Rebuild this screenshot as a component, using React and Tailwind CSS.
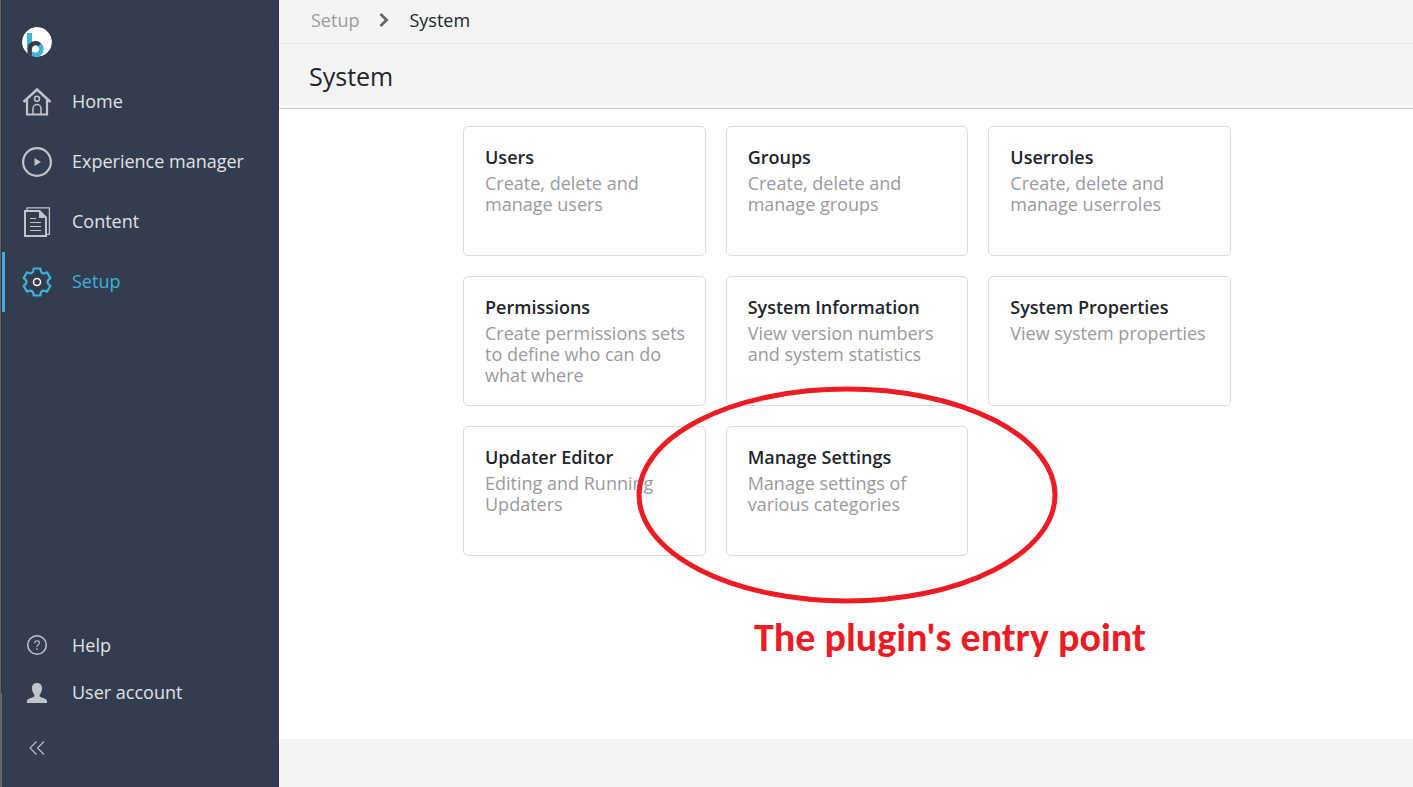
const HomeIcon = () => (
  <svg width="30" height="30" viewBox="0 0 30 30" fill="none" stroke="#c1c5cb" aria-hidden="true">
    <path d="M1.500 15 15 2.500 28.500 15" strokeWidth="2.400" />
    <path d="M5 13V27.500H25V13" strokeWidth="2.200" />
    <circle cx="15" cy="11.800" r="2.500" strokeWidth="1.500" />
    <path d="M11 27V21.500a4 4 0 0 1 8 0V27" strokeWidth="1.500" />
  </svg>
);

const PlayIcon = () => (
  <svg width="30" height="30" viewBox="0 0 30 30" aria-hidden="true">
    <circle cx="15" cy="15" r="13.900" fill="none" stroke="#c1c5cb" strokeWidth="2.200" />
    <path d="M12.500 11v8L19 15z" fill="#c1c5cb" />
  </svg>
);

const ContentIcon = () => (
  <svg width="30" height="30" viewBox="0 0 30 30" fill="none" stroke="#c1c5cb" aria-hidden="true">
    <path d="M5 3.500V.8H27.400V27.400H24" strokeWidth="1.300" />
    <path d="M3 4H17.500L24 10.500V29H3z" strokeWidth="2" />
    <path d="M17 3.500V11h7.500z" fill="#c1c5cb" stroke="none" />
    <path d="M8 11.500h6M8 15.500h11M8 19.500h11M8 23.500h11" strokeWidth="1.200" />
  </svg>
);

const polar = (radius, degrees) => {
  const a = (degrees * Math.PI) / 180;
  return `${(15 + radius * Math.cos(a)).toFixed(2)} ${(15 + radius * Math.sin(a)).toFixed(2)}`;
};

const gearPath =
  [30, 90, 150, 210, 270, 330]
    .map(
      (a, i) =>
        `${i ? 'L' : 'M'}${polar(13.9, a - 14)}L${polar(13.9, a + 14)}L${polar(11.6, a + 19)}Q${polar(9.6, a + 30)} ${polar(11.6, a + 41)}`,
    )
    .join('') + 'Z';

const GearIcon = () => (
  <svg width="30" height="30" viewBox="0 0 30 30" fill="none" aria-hidden="true">
    <path d={gearPath} stroke="#3eb1dc" strokeWidth="2.200" strokeLinejoin="round" />
    <circle cx="15" cy="15" r="3.500" stroke="#fff" strokeWidth="1.500" />
  </svg>
);

const HelpIcon = () => (
  <svg width="30" height="30" viewBox="0 0 30 30" fill="none" stroke="#c1c5cb" aria-hidden="true">
    <circle cx="15" cy="15" r="9.300" strokeWidth="1.500" />
    <path d="M12.700 13.300c0-3.500 4.800-3.200 4.800-.5 0 1.800-2.500 1.800-2.500 4" strokeWidth="1.100" />
    <path d="M15 18.300v1.400" strokeWidth="1.300" />
  </svg>
);

const UserIcon = () => (
  <svg width="30" height="30" viewBox="0 0 30 30" fill="#c1c5cb" aria-hidden="true">
    <path d="M15 5c3.400 0 5 2.200 5 5.200 0 2.600-.9 4.700-2.300 6v2.300c.6 1 7.300 1.800 7.300 4.500v2H5v-2c0-2.700 6.700-3.500 7.300-4.500v-2.300c-1.400-1.300-2.300-3.400-2.300-6C10 7.200 11.600 5 15 5z" />
  </svg>
);

const Logo = () => (
  <svg width="30" height="30" viewBox="0 0 30 30" aria-hidden="true">
    <clipPath id="disc">
      <circle cx="15" cy="15" r="15" />
    </clipPath>
    <g clipPath="url(#disc)">
      <circle cx="15" cy="15" r="15" fill="#fff" />
      <path d="M5 6h5v12l-5 5z" fill="#3eb1dc" />
      <path d="M17.600 17.900A5.800 5.800 0 1 1 9.500 26.200" fill="none" stroke="#3eb1dc" strokeWidth="4.600" />
      <path d="M7.700 30V22a5.800 5.800 0 0 1 9.900-4.100" fill="none" stroke="#323d4f" strokeWidth="4.400" />
    </g>
  </svg>
);

const mainLinks = [
  { label: 'Home', Icon: HomeIcon },
  { label: 'Experience manager', Icon: PlayIcon },
  { label: 'Content', Icon: ContentIcon },
  { label: 'Setup', Icon: GearIcon, active: true },
];

const cards = [
  { title: 'Users', text: 'Create, delete and manage users' },
  { title: 'Groups', text: 'Create, delete and manage groups' },
  { title: 'Userroles', text: 'Create, delete and manage userroles' },
  { title: 'Permissions', text: 'Create permissions sets to define who can do what where' },
  { title: 'System Information', text: 'View version numbers and system statistics' },
  { title: 'System Properties', text: 'View system properties' },
  { title: 'Updater Editor', text: 'Editing and Running Updaters' },
  { title: 'Manage Settings', text: 'Manage settings of various categories', marked: true },
];

function Annotation() {
  return (
    <div className="pointer-events-none absolute -top-10 left-1/2 z-10 -ml-[211px]">
      <svg width="422" height="218" viewBox="0 0 422 218" fill="none" aria-hidden="true">
        <ellipse cx="211" cy="109" rx="208" ry="106" stroke="#ed1c24" strokeWidth="5" />
      </svg>
      <p className="mt-2.5 ml-[118px] font-['Carlito','Lato',sans-serif] text-[40px] leading-12 font-bold whitespace-nowrap text-[#ed1c24]">
        The plugin's entry point
      </p>
    </div>
  );
}

export default function App() {
  return (
    <div className="flex min-h-screen bg-[#f4f4f4] font-['Open_Sans',sans-serif] text-lg text-[#22252b]">
      <div className="flex w-0.5 shrink-0 flex-col border-l border-[#646669] bg-[#646669]">
        <div className="h-[88%] bg-[#2b333c]" />
      </div>
      <aside className="flex w-[277px] shrink-0 flex-col bg-[#323d4f] text-[#e0e2e5]">
        <a href="#" aria-label="Dashboard" className="mt-[27px] mb-[15px] ml-5 self-start">
          <Logo />
        </a>
        <nav aria-label="Main">
          {mainLinks.map(({ label, Icon, active }) => (
            <a
              key={label}
              href="#"
              aria-current={active ? 'page' : undefined}
              className={
                active
                  ? 'flex h-15 items-center gap-5 border-l-3 border-[#3eb1dc] pl-[17px] text-[#3eb1dc]'
                  : 'flex h-15 items-center gap-5 border-l-3 border-transparent pl-[17px]'
              }
            >
              <Icon />
              <span className="pb-0.5">{label}</span>
            </a>
          ))}
        </nav>
        <nav aria-label="Account" className="mt-auto pl-5">
          <a href="#" className="flex h-12 items-center gap-5">
            <HelpIcon />
            Help
          </a>
          <a href="#" className="flex h-12 items-center gap-5">
            <UserIcon />
            <span className="pb-0.5">User account</span>
          </a>
        </nav>
        <button type="button" aria-label="Collapse menu" className="mt-4 mb-6 ml-5 self-start">
          <svg width="30" height="30" viewBox="0 0 30 30" fill="none" stroke="#c1c5cb" strokeWidth="1.100" aria-hidden="true">
            <path d="M14.500 8.500 8 15l6.500 6.500M22 8.500 15.500 15l6.500 6.500" />
          </svg>
        </button>
      </aside>

      <div className="flex min-w-0 flex-1 flex-col">
        <nav aria-label="Breadcrumb" className="flex h-11 items-center border-b border-[#e6e6e6] px-8 pb-1">
          <a href="#" className="text-[#9b9b9b]">Setup</a>
          <svg width="10" height="16" viewBox="0 0 10 16" fill="none" stroke="#666" strokeWidth="2.800" className="mx-5" aria-hidden="true">
            <path d="M1.500 2 7.500 8l-6 6" />
          </svg>
          <span>System</span>
        </nav>
        <header className="flex h-[65px] items-center border-b border-[#d2d2d2] px-[30px]">
          <h1 className="text-[25px]">System</h1>
        </header>
        <main className="flex-1 bg-white pt-[17px] pr-5 pb-5 pl-[22px]">
          <div className="mx-auto grid max-w-[768px] grid-cols-3 gap-5">
            {cards.map(({ title, text, marked }) => (
              <div key={title} className="relative">
                <a href="#" className="block min-h-[130px] rounded-[5px] border border-[#dcdcdc] pt-5 pr-4 pb-4 pl-[21px]">
                  <h2 className="leading-[21px] font-semibold">{title}</h2>
                  <p className="mt-[5px] leading-[21px] text-[#9a9a9e]">{text}</p>
                </a>
                {marked && <Annotation />}
              </div>
            ))}
          </div>
        </main>
        <footer className="h-12" />
      </div>
    </div>
  );
}
